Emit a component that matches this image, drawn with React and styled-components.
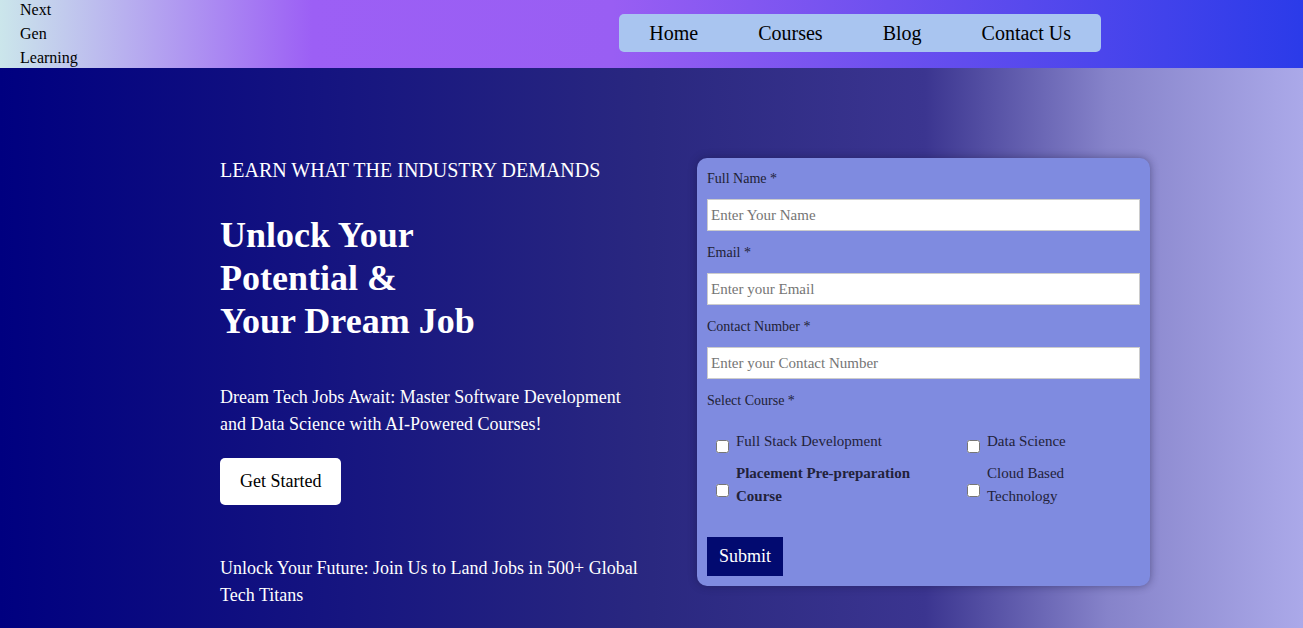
import React from 'react'
import styled, { createGlobalStyle } from 'styled-components'

const GlobalStyle = createGlobalStyle`
  * { box-sizing: border-box; }
  body {
    margin: 0;
    font-family: "Liberation Serif", "Times New Roman", serif;
  }
`

const courses = [
  { label: 'Full Stack Development', width: 200 },
  { label: 'Data Science', width: 120 },
  { label: 'Placement Pre-preparation Course', width: 200, bold: true },
  { label: 'Cloud Based Technology', width: 120 },
]

const App = () => {
  return (
    <>
      <GlobalStyle />
      <Header>
        <Logo>
          Next<br />Gen<br />Learning
        </Logo>
        <Nav>
          <NavItem>Home</NavItem>
          <NavItem>Courses</NavItem>
          <NavItem>Blog</NavItem>
          <NavItem>Contact Us</NavItem>
        </Nav>
      </Header>
      <Hero>
        <Intro>
          <Eyebrow>LEARN WHAT THE INDUSTRY DEMANDS</Eyebrow>
          <Title>
            Unlock Your<br />Potential &amp;<br />Your Dream Job
          </Title>
          <Text>
            Dream Tech Jobs Await: Master Software Development and Data Science with AI-Powered Courses!
          </Text>
          <StartButton>Get Started</StartButton>
          <Text $top={50}>
            Unlock Your Future: Join Us to Land Jobs in 500+ Global Tech Titans
          </Text>
        </Intro>
        <Form onSubmit={(e) => e.preventDefault()}>
          <Label>Full Name *</Label>
          <Input type="text" placeholder="Enter Your Name" />
          <Label>Email *</Label>
          <Input type="email" placeholder="Enter your Email" />
          <Label>Contact Number *</Label>
          <Input type="text" placeholder="Enter your Contact Number" />
          <Label>Select Course *</Label>
          <Options>
            {courses.map((c) => (
              <Option key={c.label}>
                <Check type="checkbox" />
                <OptionText $width={c.width} $bold={c.bold}>{c.label}</OptionText>
              </Option>
            ))}
          </Options>
          <Submit type="submit">Submit</Submit>
        </Form>
      </Hero>
    </>
  )
}

const Header = styled.header`
  height: 68px;
  display: flex;
  align-items: center;
  padding: 0 202px 0 20px;
  background: linear-gradient(to right, #cbe6eb 0%, #9c5ff5 24%, #995ef3 47%, #2b3be9 100%);
`

const Logo = styled.div`
  font-size: 16px;
  line-height: 24px;
  color: #000;
  margin-bottom: 1px;
`

const Nav = styled.nav`
  margin-left: auto;
  margin-bottom: 2px;
  display: flex;
  align-items: center;
  height: 38px;
  background-color: #a9c5f0;
  border-radius: 5px;
`

const NavItem = styled.a`
  padding: 0 30px;
  font-size: 20px;
  color: #000;
  cursor: pointer;
`

const Hero = styled.section`
  min-height: 560px;
  display: flex;
  align-items: flex-start;
  gap: 52px;
  padding: 90px 0 0 220px;
  background: linear-gradient(to right, #000080 0%, #2a2880 50%, #3b3590 71%, #8683ca 85%, #aba9e9 100%);
`

const Intro = styled.div`
  width: 425px;
  color: #fff;
  padding-top: 1px;
`

const Eyebrow = styled.h3`
  margin: 0;
  font-size: 20px;
  line-height: 23px;
  font-weight: normal;
`

const Title = styled.h1`
  margin: 32px 0 0;
  font-size: 36px;
  line-height: 43px;
  font-weight: bold;
`

const Text = styled.p`
  margin: ${(p) => p.$top || 41}px 0 0;
  font-size: 18px;
  line-height: 27px;
`

const StartButton = styled.button`
  display: block;
  margin-top: 20px;
  height: 47px;
  padding: 0 20px;
  border: none;
  border-radius: 5px;
  background-color: #fff;
  color: #000;
  font-family: inherit;
  font-size: 18px;
  cursor: pointer;
`

const Form = styled.form`
  width: 453px;
  padding: 13px 10px 10px;
  background-color: #7f8be0;
  border-radius: 10px;
  box-shadow: 0 0 8px rgba(20, 20, 60, 0.45);
  display: flex;
  flex-direction: column;
  align-items: flex-start;
`

const Label = styled.label`
  display: block;
  font-size: 14px;
  line-height: 16px;
  color: #1e1e35;
`

const Input = styled.input`
  width: 100%;
  height: 32px;
  margin: 12px 0 14px;
  padding: 0 3px;
  border: 1px solid #ccc;
  background: #fff;
  font-family: inherit;
  font-size: 15px;
  outline: none;
  &::placeholder {
    color: #757575;
  }
`

const Options = styled.div`
  width: 100%;
  margin-top: 21px;
  display: grid;
  grid-template-columns: 251px 1fr;
  row-gap: 9px;
`

const Option = styled.div`
  display: flex;
  align-items: center;
  padding-left: 9px;
`

const Check = styled.input`
  width: 13px;
  height: 13px;
  margin: 10px 7px 0 0;
`

const OptionText = styled.span`
  max-width: ${(p) => p.$width}px;
  font-size: 15px;
  line-height: 23px;
  color: #22223a;
  font-weight: ${(p) => (p.$bold ? 'bold' : 'normal')};
`

const Submit = styled.button`
  margin-top: 29px;
  height: 39px;
  padding: 0 12px;
  border: none;
  background-color: #020a70;
  color: #fff;
  font-family: inherit;
  font-size: 18px;
  cursor: pointer;
`

export default App
